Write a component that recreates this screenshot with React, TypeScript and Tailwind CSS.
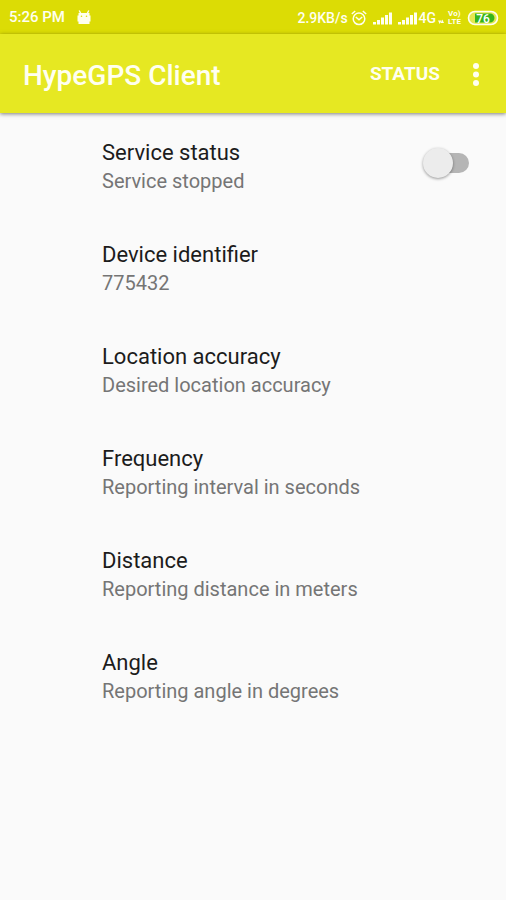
import { useState } from "react";

const preferences = [
  { title: "Device identifier", summary: "775432" },
  { title: "Location accuracy", summary: "Desired location accuracy" },
  { title: "Frequency", summary: "Reporting interval in seconds" },
  { title: "Distance", summary: "Reporting distance in meters" },
  { title: "Angle", summary: "Reporting angle in degrees" },
];

function RobotIcon() {
  return (
    <svg className="h-4 w-3.5" viewBox="0 0 14 16" fill="none" aria-hidden="true">
      <path d="M2.2 .5l1.6 3M11.8 .5l-1.6 3" stroke="#fffff0" strokeWidth="1.4" />
      <path d="M1.5 3h11v2.5h1v6h-1v2.5h-11v-2.5h-1v-6h1z" fill="#fffff0" />
      <circle cx="4.5" cy="6.3" r="0.8" fill="#dcdc05" />
      <circle cx="9.5" cy="6.3" r="0.8" fill="#dcdc05" />
    </svg>
  );
}

function AlarmIcon() {
  return (
    <svg className="h-4 w-4" viewBox="0 0 16 16" fill="none" stroke="#fffff0" strokeWidth="1.5" aria-hidden="true">
      <circle cx="8" cy="8.8" r="5.8" />
      <path d="M.8 4l3.4-3M15.2 4l-3.4-3M4.8 7l3.2 2.8L11.2 7" />
    </svg>
  );
}

function SignalIcon() {
  return (
    <svg className="h-3.5 w-[19px]" viewBox="0 0 19 14" fill="#fffff0" aria-hidden="true">
      <path d="M0 11h3v2.5H0zM4 9h3v4.5H4zM8 6.5h3v7H8zM12 4h3v9.5h-3zM16 1.5h3v12h-3z" />
    </svg>
  );
}

function Battery() {
  return (
    <svg className="h-4 w-8" viewBox="0 0 32 16" role="img" aria-label="Battery 76">
      <rect x="1.5" y="1.5" width="29" height="13" rx="6.5" fill="#e4e850" stroke="#fffff0" strokeWidth="1.6" />
      <path d="M8 3.5h15a4.5 4.5 0 0 1 0 9H8z" fill="#35b51c" />
      <text x="16" y="12.5" textAnchor="middle" fontFamily="Roboto, sans-serif" fontSize="12" fontWeight="500" fill="#ffffff">
        76
      </text>
    </svg>
  );
}

function StatusBar() {
  return (
    <div className="flex h-[34px] items-center justify-between bg-[#dcdc05] pt-0.5 pr-[7px] pl-[9px] text-sm font-medium text-[#fffff0]">
      <div className="flex items-center gap-3">
        <span className="text-[15px]">5:26 PM</span>
        <RobotIcon />
      </div>
      <div className="flex items-center gap-1.5">
        <div className="flex items-center gap-[3px]">
          <span>2.9KB/s</span>
          <AlarmIcon />
        </div>
        <SignalIcon />
        <div className="flex items-center gap-0.5">
          <SignalIcon />
          <span>4G</span>
          <svg className="h-3.5 w-1.5" viewBox="0 0 6 14" fill="#fffff0" aria-hidden="true">
            <path d="M0 9.5h3.4l-1.7 3.5zM2.6 12l1.7-3.5L6 12z" />
          </svg>
        </div>
        <div className="-ml-0.5 flex flex-col text-[8px] leading-none font-bold">
          <span>Vo)</span>
          <span>LTE</span>
        </div>
        <Battery />
      </div>
    </div>
  );
}

export default function App() {
  const [running, setRunning] = useState(false);

  return (
    <div className="min-h-screen bg-[#fafafa] font-[Roboto,sans-serif]">
      <StatusBar />
      <header className="relative flex h-[79px] items-center justify-between bg-[#e6e822] pt-0.5 pr-4 pl-[23px] text-[#fffff0] shadow-[0_1px_4px_rgba(0,0,0,0.5)]">
        <h1 className="pt-0.5 text-[28px] font-medium">HypeGPS Client</h1>
        <div className="flex items-center gap-[22px]">
          <button type="button" className="text-[19px] font-bold">
            STATUS
          </button>
          <button type="button" aria-label="More options" className="flex w-7 justify-center">
            <svg className="h-6 w-1.5" viewBox="0 0 6 24" fill="currentColor" aria-hidden="true">
              <circle cx="3" cy="3" r="3" />
              <circle cx="3" cy="11.5" r="3" />
              <circle cx="3" cy="20" r="3" />
            </svg>
          </button>
        </div>
      </header>
      <main className="pt-[3px]">
        <label className="flex items-start justify-between py-[23px] pr-[37px] pl-[102px]">
          <span>
            <span className="block text-[22px] leading-7 text-[#1c1c1c]">Service status</span>
            <span className="block text-[20px] leading-7 text-[#757575]">Service stopped</span>
          </span>
          <span className="relative mt-2 flex h-8 w-[46px] items-center">
            <input
              type="checkbox"
              role="switch"
              checked={running}
              onChange={(event) => setRunning(event.target.checked)}
              className="peer ml-2 h-5 w-full appearance-none rounded-full bg-[#b5b5b5]"
            />
            <span className="absolute left-0 size-[30px] rounded-full bg-[#ececec] shadow-[0_1px_3px_rgba(0,0,0,0.4)] peer-checked:left-4" />
          </span>
        </label>
        {preferences.map((item) => (
          <button key={item.title} type="button" className="block w-full py-[23px] pr-6 pl-[102px] text-left">
            <span className="block text-[22px] leading-7 text-[#1c1c1c]">{item.title}</span>
            <span className="block text-[20px] leading-7 text-[#757575]">{item.summary}</span>
          </button>
        ))}
      </main>
    </div>
  );
}
